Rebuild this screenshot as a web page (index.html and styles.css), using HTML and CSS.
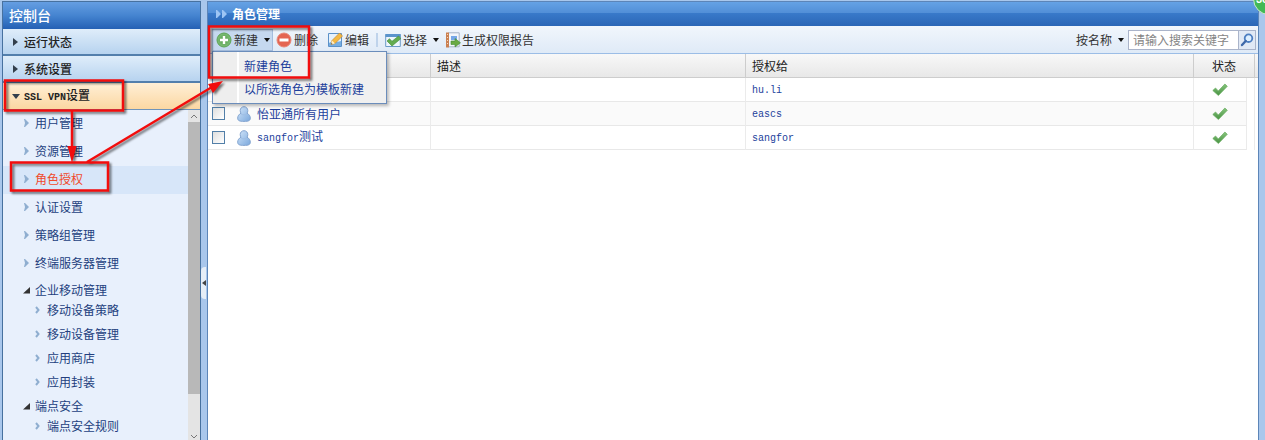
FILE: index.html
```html
<!DOCTYPE html>
<html lang="zh-CN">
<head>
<meta charset="utf-8">
<title>角色管理</title>
<link rel="stylesheet" href="styles.css">
</head>
<body>
<svg class="defs" aria-hidden="true">
  <defs>
    <linearGradient id="userFill" x1="0" y1="0" x2="1" y2="1"><stop offset="0" stop-color="#d3e6fa"/><stop offset="1" stop-color="#7ba8dc"/></linearGradient>
    <linearGradient id="tickFill" x1="0" y1="0" x2="0" y2="1"><stop offset="0" stop-color="#86c47c"/><stop offset="1" stop-color="#499343"/></linearGradient>
    <radialGradient id="plusFill"><stop offset="0" stop-color="#4f9d47"/><stop offset="1" stop-color="#80bd78"/></radialGradient>
    <symbol id="user" viewBox="0 0 14 16"><path d="M7 .7c2.300 0 3.800 1.700 3.800 3.900 0 1.100-.3 1.900-.8 2.600 2 1 3.300 2.800 3.300 4.800 0 2.600-1.500 3.400-6.300 3.400S.7 14.600.7 12c0-2 1.300-3.800 3.300-4.800-.5-.7-.8-1.500-.8-2.600C3.200 2.400 4.700.7 7 .7z" fill="url(#userFill)" stroke="#84a5d0"/><path d="M4 7.800c2 1.500 4 1.500 6 0" fill="none" stroke="#9dbde4"/></symbol>
    <symbol id="tick" viewBox="0 0 16 14"><path d="M.8 7.500 3.500 5l2.800 2.900L12.900 1l2.400 2.300-8.900 9.200z" fill="url(#tickFill)" stroke="#68ad60" stroke-width=".7"/></symbol>
    <symbol id="arrow" viewBox="0 0 5 8"><path d="M0 0h1l4 4-4 4H0l1-4z" fill="#8faed0"/></symbol>
    <symbol id="fold" viewBox="0 0 7 7"><path d="M7 0v6.500H0z" fill="#333"/></symbol>
  </defs>
</svg>
<div class="console">
  <aside class="sidebar">
    <h1 class="sidebar-title">控制台</h1>
    <nav class="sections">
      <a class="section" href="#status"><svg class="closed" viewBox="0 0 5 8"><path d="M0 0l5 4-5 4z"/></svg>运行状态</a>
      <a class="section" href="#system"><svg class="closed" viewBox="0 0 5 8"><path d="M0 0l5 4-5 4z"/></svg>系统设置</a>
      <a class="section open" href="#vpn"><svg class="opened" viewBox="0 0 8 5"><path d="M0 0h8L4 5z"/></svg><span><span class="latin">SSL VPN</span>设置</span></a>
    </nav>
    <div class="tree-area">
      <nav class="tree">
        <a class="leaf" href="#"><svg><use href="#arrow"/></svg>用户管理</a>
        <a class="leaf" href="#"><svg><use href="#arrow"/></svg>资源管理</a>
        <a class="leaf selected" href="#"><svg><use href="#arrow"/></svg>角色授权</a>
        <a class="leaf" href="#"><svg><use href="#arrow"/></svg>认证设置</a>
        <a class="leaf" href="#"><svg><use href="#arrow"/></svg>策略组管理</a>
        <a class="leaf" href="#"><svg><use href="#arrow"/></svg>终端服务器管理</a>
        <a class="parent" href="#"><svg><use href="#fold"/></svg>企业移动管理</a>
        <a class="child" href="#"><svg viewBox="0 0 5 8"><path d="M1 1l2.500 3L1 7"/></svg>移动设备策略</a>
        <a class="child" href="#"><svg viewBox="0 0 5 8"><path d="M1 1l2.500 3L1 7"/></svg>移动设备管理</a>
        <a class="child" href="#"><svg viewBox="0 0 5 8"><path d="M1 1l2.500 3L1 7"/></svg>应用商店</a>
        <a class="child" href="#"><svg viewBox="0 0 5 8"><path d="M1 1l2.500 3L1 7"/></svg>应用封装</a>
        <a class="parent" href="#"><svg><use href="#fold"/></svg>端点安全</a>
        <a class="child" href="#"><svg viewBox="0 0 5 8"><path d="M1 1l2.500 3L1 7"/></svg>端点安全规则</a>
      </nav>
      <div class="scrollbar" aria-hidden="true">
        <svg class="scroll-end" viewBox="0 0 12 12"><path d="M3 8l3-3 3 3"/></svg>
        <div class="thumb"></div>
        <div class="track"></div>
        <svg class="scroll-end" viewBox="0 0 12 12"><path d="M3 7l3 3 3-3"/></svg>
      </div>
    </div>
  </aside>
  <div class="splitter"><button class="collapse" aria-label="收起"><svg viewBox="0 0 4 6"><path d="M4 0v6L0 3z"/></svg></button></div>
  <main class="main">
    <h2 class="main-title"><svg viewBox="0 0 11 8"><path d="M0 0h1l4 4-4 4H0zM6 0h1l4 4-4 4H6z"/></svg>角色管理</h2>
    <div class="toolbar">
      <div class="new-wrap">
        <button class="tool pressed"><svg class="icon" viewBox="0 0 16 16"><circle cx="8" cy="8" r="7" fill="url(#plusFill)" stroke="#5ba453"/><path d="M8 4v8M4 8h8" stroke="#fff" stroke-width="2.400"/></svg>新建<svg class="caret" viewBox="0 0 6 4"><path d="M0 0h6L3 4z"/></svg></button>
        <div class="menu">
          <a href="#">新建角色</a>
          <a href="#">以所选角色为模板新建</a>
        </div>
      </div>
      <button class="tool"><svg class="icon" viewBox="0 0 16 16"><circle cx="8" cy="8" r="7" fill="#e46552" stroke="#e88778"/><path d="M3.500 8h9" stroke="#fff" stroke-width="3"/></svg>删除</button>
      <button class="tool edit"><svg class="icon" viewBox="0 0 16 16"><path d="M1.500 1.500h13v13h-13z" fill="#e6f1fb" stroke="#5b91c8"/><path d="M2 11c4-3 8 0 12-2v5H2z" fill="#75aee4"/><path d="M4 12.500l1-4 7.500-7.500 3 3L8 11.500z" fill="#f4b943" stroke="#c78b35" stroke-width=".7"/><path d="M4 12.500l1-4 3 3z" fill="#fff0c9"/><path d="M4 12.500l.5-1.500 1 1z" fill="#333"/></svg>编辑</button>
      <span class="divider"></span>
      <button class="tool"><svg class="icon" viewBox="0 0 16 16"><path d="M.7 2.500h14.600v12H.7z" fill="#eef6fc" stroke="#6c9bc8"/><path d="M.5 2h15v3H.5z" fill="#5b94cc"/><path d="M2 9l2.500-2.300L7 9.300 13.500 4 16 6.500 7 14z" fill="#63ac4f" stroke="#438d3a" stroke-width=".6"/></svg>选择<svg class="caret" viewBox="0 0 6 4"><path d="M0 0h6L3 4z"/></svg></button>
      <button class="tool report"><svg class="icon" viewBox="0 0 16 16"><path d="M3.500.8h10.700v14H3.500z" fill="#f3f6fb" stroke="#a6b2c5"/><path d="M1 .5h3v15H1z" fill="#ca8052"/><path d="M2 2h1v1H2zm0 3h1v1H2zm0 3h1v1H2zm0 3h1v1H2z" fill="#f5d8bb"/><path d="M6 4h6v4H6z" fill="#76a8e8"/><path d="M6 9h4V6.500l5.500 4.300L10 15v-2.500H6z" fill="#6aaa43" stroke="#438b37" stroke-width=".6"/></svg>生成权限报告</button>
      <form class="search">
        <button class="tool by" type="button">按名称<svg class="caret" viewBox="0 0 6 4"><path d="M0 0h6L3 4z"/></svg></button>
        <input type="text" aria-label="搜索" placeholder="请输入搜索关键字">
        <button class="go" type="button" aria-label="搜索"><svg viewBox="0 0 14 14"><circle cx="8.500" cy="5.200" r="3.800" fill="#deefff" stroke="#4e7fc1" stroke-width="1.800"/><path d="M5.700 8L2 12" stroke="#3f69aa" stroke-width="2.400" stroke-linecap="round"/></svg></button>
      </form>
    </div>
    <table class="roles">
      <colgroup><col class="c-check"><col class="c-name"><col class="c-desc"><col class="c-grant"><col class="c-state"><col class="c-gap"><col class="c-end"></colgroup>
      <thead><tr><th><input type="checkbox" aria-label="全选"></th><th></th><th>描述</th><th>授权给</th><th class="state" colspan="2">状态</th><th></th></tr></thead>
      <tbody>
        <tr><td><input type="checkbox" aria-label="选择"></td><td></td><td></td><td><span class="latin">hu.li</span></td><td class="state"><svg><use href="#tick"/></svg></td><td class="gap"></td><td class="end"></td></tr>
        <tr><td><input type="checkbox" aria-label="选择怡亚通所有用户"></td><td><a href="#"><svg><use href="#user"/></svg>怡亚通所有用户</a></td><td></td><td><span class="latin">eascs</span></td><td class="state"><svg><use href="#tick"/></svg></td><td class="gap"></td><td class="end"></td></tr>
        <tr><td><input type="checkbox" aria-label="选择sangfor测试"></td><td><a href="#"><svg><use href="#user"/></svg><span><span class="latin">sangfor</span>测试</span></a></td><td></td><td><span class="latin">sangfor</span></td><td class="state"><svg><use href="#tick"/></svg></td><td class="gap"></td><td class="end"></td></tr>
      </tbody>
    </table>
  </main>
</div>
<svg class="marks" aria-hidden="true">
  <g fill="none" stroke="#f20d0d" stroke-width="2.500">
    <path d="M5 80.500h118v30H5zM11 162.500h97v28H11zM209 26.500h100v51H209zM72 111v42M87 162L212 87"/>
  </g>
  <path d="M67.500 146h9l-4.500 17zM223 81l-10 12-5-9z" fill="#f20d0d"/>
</svg>
<div class="badge">36</div>
</body>
</html>
```
FILE: styles.css
```css
* { box-sizing: border-box; }
body {
  margin: 0;
  overflow: hidden;
  background: #a9c7ec;
  color: #222;
  font: 12px/16px "Noto Sans CJK SC", sans-serif;
}
a { color: #1d3f9c; text-decoration: none; }
button, input { font: inherit; }
svg { flex: none; }
.defs { position: absolute; width: 0; height: 0; }
.latin { font-family: "Liberation Mono", monospace; font-size: 10px; }
.console { display: flex; height: 100vh; padding: 1px 6px 0 2px; }

.sidebar {
  display: flex;
  flex-direction: column;
  width: 199px;
  border: 1px solid #47719f;
  border-bottom: 0;
}
.sidebar-title {
  height: 27px;
  margin: 0;
  padding-left: 6px;
  background: linear-gradient(#659ee2, #4584d0 50%, #2460b4);
  color: #fff;
  font-size: 14px;
  line-height: 27px;
  font-weight: 500;
}
.section {
  display: flex;
  align-items: center;
  gap: 6px;
  height: 27px;
  padding-left: 10px;
  border-bottom: 2px solid #537fac;
  background: linear-gradient(#dfedfa, #b7d3ef);
  color: #222;
  font-weight: 500;
}
.section.open {
  gap: 4px;
  padding-left: 9px;
  border-bottom: 1px solid #6f94ba;
  background: linear-gradient(#ffefd6, #fbd7a2);
}
.section .latin { font-weight: 700; }
.section svg { fill: #333f4c; }
.closed { width: 5px; height: 8px; }
.opened { width: 8px; height: 5px; }
.tree-area { display: flex; flex: 1; min-height: 0; background: #e8f0fc; }
.tree { flex: 1; overflow: hidden; }
.tree a { display: flex; align-items: center; color: #233f7e; }
.tree svg { width: 5px; height: 8px; margin-right: 7px; }
.tree .leaf { height: 28px; padding: 0 0 2px 21px; }
.tree .leaf svg { margin-right: 6px; }
.tree .selected { background: #d7e6f9; color: #f04a2c; }
.tree .parent { height: 16px; margin-top: 4px; padding-left: 20px; }
.tree .parent svg { width: 7px; height: 7px; margin-right: 5px; }
.tree .child { height: 24px; padding-left: 32px; }
.tree .child svg { fill: none; stroke: #8faed0; stroke-width: 2; }
.scrollbar { display: flex; flex-direction: column; width: 12px; background: #e4e4e4; }
.scroll-end { width: 12px; height: 12px; fill: none; stroke: #777; }
.thumb { flex: 8; background: #b8b8b8; }
.track { flex: 1; }

.splitter { display: flex; align-items: center; width: 6px; }
.collapse {
  display: flex;
  align-items: center;
  justify-content: center;
  width: 5px;
  height: 32px;
  margin-top: 124px;
  padding: 0;
  border: 0;
  border-radius: 4px 0 0 4px;
  background: #e6eef7;
}
.collapse svg { width: 4px; height: 6px; fill: #444; }

.main { flex: 1; min-width: 0; border: 1px solid #5c85b8; border-bottom: 0; background: #fff; }
.main-title {
  display: flex;
  align-items: center;
  gap: 5px;
  height: 24px;
  margin: 0;
  padding-left: 8px;
  background: linear-gradient(#65a2e5, #528fd7 45%, #397aca 46%, #2b66b6);
  color: #fff;
  font-size: 12px;
  font-weight: 700;
}
.main-title svg { width: 11px; height: 8px; fill: #9ec5f4; }
.toolbar {
  display: flex;
  align-items: center;
  height: 28px;
  padding: 0 2px 0 4px;
  border-bottom: 1px solid #9bbde6;
  background: linear-gradient(#f1f6fc, #dfeaf7);
}
.new-wrap { position: relative; margin-right: 3px; }
.tool {
  display: flex;
  align-items: center;
  gap: 2px;
  height: 22px;
  padding: 0;
  border: 0;
  background: none;
  color: #333;
  white-space: nowrap;
}
.pressed { width: 61px; padding-left: 3px; border: 1px solid #a4bddd; background: #c5d8ef; }
.icon { width: 16px; height: 16px; }
.caret { width: 6px; height: 4px; margin-left: 4px; fill: #111; }
.edit { margin-left: 9px; }
.divider { width: 2px; height: 14px; margin: 0 7px; background: #bfd3eb; }
.report { margin-left: 6px; gap: 1px; }
.menu {
  position: absolute;
  z-index: 1;
  top: 22px;
  left: 0;
  width: 175px;
  padding: 2px 0 3px;
  border: 1px solid #6b8dbb;
  background: linear-gradient(90deg, #eee 24px, #fff 24px, #fff 26px, #f0f0f0 26px);
  box-shadow: 2px 2px 3px #0004;
}
.menu a { display: block; padding-left: 31px; line-height: 23px; }
.search { display: flex; align-items: center; margin-left: auto; }
.by { margin-right: 4px; }
.search input {
  width: 111px;
  height: 20px;
  padding: 0 4px;
  border: 1px solid #aab4ca;
  border-radius: 0;
  background: #fff;
}
.search input::placeholder { color: #858585; opacity: 1; }
.go {
  display: grid;
  place-items: center;
  width: 17px;
  height: 20px;
  padding: 0;
  border: 1px solid #aab4ca;
  border-left: 0;
  background: #e1e9f5;
}
.go svg { width: 14px; height: 14px; }

.roles { width: 100%; table-layout: fixed; border-collapse: separate; border-spacing: 0; }
.c-check { width: 23px; }
.c-name { width: 200px; }
.c-desc { width: 315px; }
.c-state { width: 53px; }
.c-gap { width: 8px; }
.c-end { width: 3px; }
.roles th {
  height: 24px;
  padding: 0 6px;
  border-right: 1px solid #cdcdcd;
  border-bottom: 1px solid #cdcdcd;
  background: linear-gradient(#f8f8f8, #e8e8e8);
  font-weight: 400;
  text-align: left;
}
.roles th:last-child { padding: 0; border-right: 0; }
.roles td {
  height: 24px;
  padding: 0 6px;
  border-right: 1px solid #ebebeb;
  border-bottom: 1px solid #e8e8e8;
  color: #1d3f9c;
}
.roles th:first-child, .roles td:first-child { padding: 0 4px; border-right: 0; }
.roles tr:nth-child(even) td { background: #fafafa; }
.roles .state { padding: 0; text-align: center; }
.roles .gap { padding: 0; border-bottom: 0; }
.roles .end { padding: 0; border: 0; }
.roles tr:nth-child(even) .gap, .roles tr:nth-child(even) .end { background: #fff; }
.roles td a { display: flex; align-items: center; gap: 6px; }
.roles td a svg { width: 14px; height: 16px; }
.state svg { display: block; width: 16px; height: 14px; margin: 0 auto; }
.roles input {
  display: block;
  appearance: none;
  width: 13px;
  height: 13px;
  margin: 0;
  border: 1px solid #527fa8;
  background: linear-gradient(135deg, #dedede, #fff);
}

.marks {
  position: absolute;
  z-index: 2;
  top: 0;
  left: 0;
  width: 320px;
  height: 200px;
  pointer-events: none;
  filter: drop-shadow(2px 2px 1px #0008);
}
.badge {
  position: absolute;
  z-index: 3;
  top: -17px;
  right: -20px;
  width: 32px;
  height: 32px;
  padding-left: 2px;
  border: 1px solid #c8e8cc;
  border-radius: 50%;
  background: #43b955;
  color: #fff;
  font: bold 11px/30px "Liberation Sans", sans-serif;
}
```
